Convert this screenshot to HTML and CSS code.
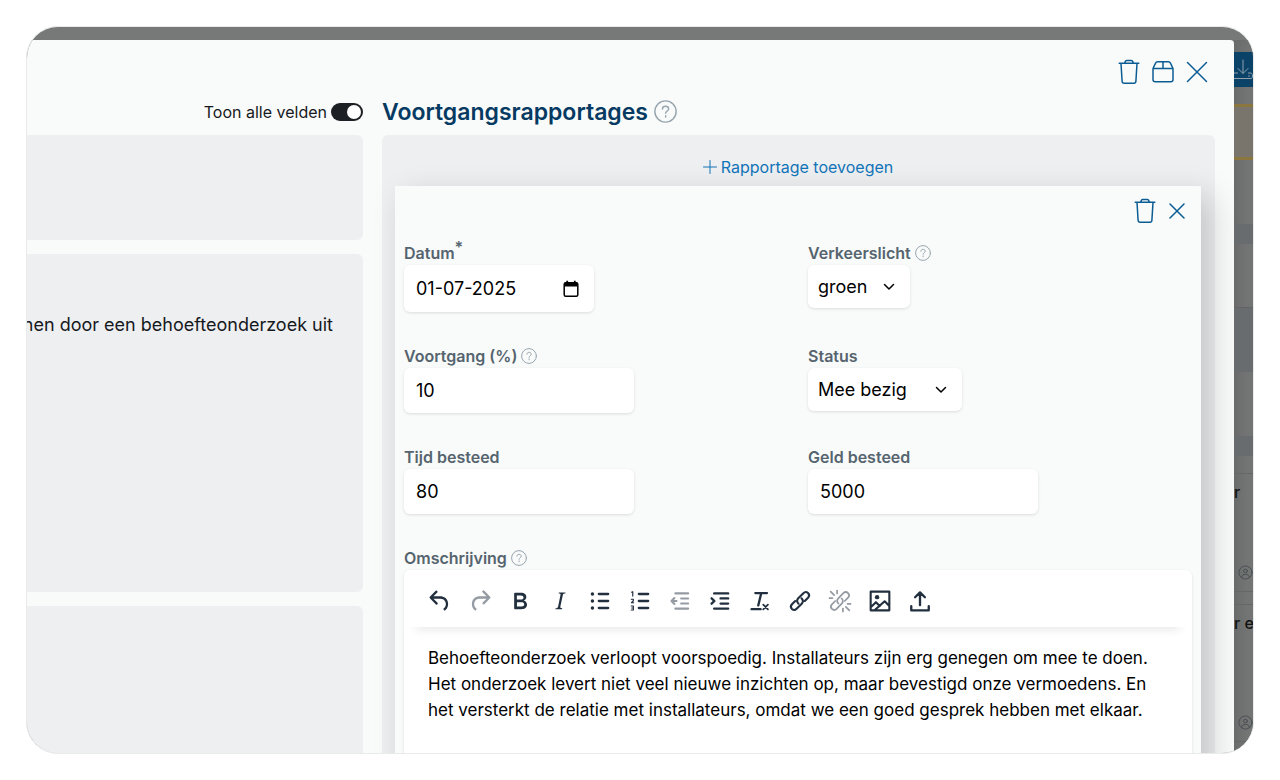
FILE: index.html
```html
<!DOCTYPE html>
<html lang="nl">
<head>
  <meta charset="UTF-8">
  <meta name="viewport" content="width=device-width, initial-scale=1">
  <title>Voortgangsrapportages</title>
  <link rel="stylesheet" href="styles.css">
</head>
<body>

<!-- Shared icons -->
<svg class="sprite" aria-hidden="true">
  <symbol id="help" viewBox="0 0 16 16">
    <circle cx="8" cy="8" r="7.4"/>
    <path d="M5.9 6.2c0-1.2.9-1.9 2.1-1.9s2.2.7 2.2 1.9c0 1.4-2.1 1.6-2.1 3.1M8.1 10.9v.9"/>
  </symbol>
  <symbol id="trash" viewBox="0 0 22 26">
    <path d="M1.2 4.2h19.6M3 4.5l1.1 17.8c.1 1.4.8 2 2 2h9.8c1.2 0 1.9-.6 2-2L19 4.5M6.6 4l.9-1.8c.3-.5.7-.7 1.3-.7h4.4c.6 0 1 .2 1.3.7l.9 1.8"/>
  </symbol>
  <symbol id="person" viewBox="0 0 16 16">
    <circle cx="8" cy="8" r="7"/>
    <circle cx="8" cy="6.4" r="2"/>
    <path d="M4 13.4c0-2.4 1.5-3.4 4-3.4s4 1 4 3.4"/>
  </symbol>
</svg>

<div class="frame">
  <main class="dialog">
    <div class="dialog-actions">
      <button class="icon-btn" aria-label="Verwijderen"><svg width="22" height="26"><use href="#trash"/></svg></button>
      <button class="icon-btn" aria-label="Archiveren">
        <svg width="22" height="24" viewBox="0 0 22 24"><path d="M1 8.5v11c0 1.500.9 2.300 2.300 2.300h15.400c1.400 0 2.300-.8 2.300-2.300v-11M1 8.500h20M1 8.500l2.400-5.100C3.900 2.200 4.600 1.700 5.700 1.700h10.600c1.100 0 1.800.5 2.300 1.700L21 8.500M11 1.700v6.800"/></svg>
      </button>
      <button class="icon-btn" aria-label="Sluiten">
        <svg width="22" height="22" viewBox="0 0 22 22"><path d="M1.500 1.500l19 19M20.500 1.500l-19 19"/></svg>
      </button>
    </div>

    <div class="columns">
      <section class="left">
        <div class="title-row">
          <label for="all-fields">Toon alle velden</label>
          <input type="checkbox" role="switch" id="all-fields" class="switch" checked>
        </div>
        <div class="block block-small"></div>
        <div class="block block-text"><p>nen door een behoefteonderzoek uit</p></div>
        <div class="block block-rest"></div>
      </section>

      <section class="right">
        <div class="title-row">
          <h2>Voortgangsrapportages</h2>
          <svg class="help help-large"><use href="#help"/></svg>
        </div>
        <div class="reports">
          <a href="#" class="add-link">
            <svg width="14" height="14" viewBox="0 0 14 14"><path d="M7 .5v13M.5 7h13"/></svg>
            Rapportage toevoegen
          </a>

          <form class="report">
            <div class="report-actions">
              <button type="button" class="icon-btn" aria-label="Rapportage verwijderen"><svg width="22" height="26"><use href="#trash"/></svg></button>
              <button type="button" class="icon-btn" aria-label="Rapportage sluiten">
                <svg width="16" height="16" viewBox="0 0 16 16"><path d="M1 1l14 14M15 1L1 15"/></svg>
              </button>
            </div>

            <div class="fields">
              <div class="field">
                <div class="label"><label for="datum">Datum<sup>*</sup></label></div>
                <div class="date">
                  <input type="text" id="datum" value="01-07-2025">
                  <svg width="16" height="18" viewBox="0 0 16 18"><path class="fill" d="M2 2.500h12v4H2zM3.300.8h1.800v2H3.300zM10.900.8h1.800v2h-1.800z"/><rect x="1.200" y="2.700" width="13.600" height="13.600" rx="1.500"/></svg>
                </div>
              </div>
              <div class="field">
                <div class="label"><label for="verkeerslicht">Verkeerslicht</label><svg class="help"><use href="#help"/></svg></div>
                <div class="select">
                  <select id="verkeerslicht" class="select-short"><option>groen</option></select>
                  <svg width="12" height="8" viewBox="0 0 12 8"><path d="M1.500 1.500L6 6l4.500-4.500"/></svg>
                </div>
              </div>
              <div class="field">
                <div class="label"><label for="voortgang">Voortgang (%)</label><svg class="help"><use href="#help"/></svg></div>
                <input type="text" id="voortgang" value="10">
              </div>
              <div class="field">
                <div class="label"><label for="status">Status</label></div>
                <div class="select">
                  <select id="status" class="select-long"><option>Mee bezig</option></select>
                  <svg width="12" height="8" viewBox="0 0 12 8"><path d="M1.500 1.500L6 6l4.500-4.500"/></svg>
                </div>
              </div>
              <div class="field">
                <div class="label"><label for="tijd">Tijd besteed</label></div>
                <input type="text" id="tijd" value="80">
              </div>
              <div class="field">
                <div class="label"><label for="geld">Geld besteed</label></div>
                <input type="text" id="geld" value="5000">
              </div>
            </div>

            <div class="label"><label for="omschrijving">Omschrijving</label><svg class="help"><use href="#help"/></svg></div>
            <div class="editor">
              <div class="toolbar">
                <button type="button" aria-label="Ongedaan maken"><svg viewBox="0 0 24 24"><path class="fill" d="M6.400 8H12c3.700 0 6.200 2 6.800 5.100.6 2.700-.4 5.600-2.300 6.800a1 1 0 0 1-1-1.800c1.100-.6 1.800-2.700 1.400-4.600-.5-2.100-2.100-3.500-4.900-3.500H6.400l3.300 3.300a1 1 0 1 1-1.400 1.400l-5-5a1 1 0 0 1 0-1.400l5-5a1 1 0 0 1 1.400 1.400L6.400 8Z"/></svg></button>
                <button type="button" aria-label="Opnieuw" disabled><svg viewBox="0 0 24 24"><path class="fill" d="M17.600 10H12c-2.800 0-4.400 1.400-4.900 3.500-.4 2 .3 4 1.400 4.600a1 1 0 1 1-1 1.800c-2-1.200-2.900-4.100-2.300-6.800.6-3 3-5.100 6.800-5.100h5.600l-3.300-3.300a1 1 0 1 1 1.400-1.400l5 5a1 1 0 0 1 0 1.400l-5 5a1 1 0 0 1-1.400-1.400l3.300-3.300Z"/></svg></button>
                <button type="button" aria-label="Vet"><svg viewBox="0 0 24 24"><path class="fill" d="M7.800 19c-.3 0-.5 0-.6-.2l-.2-.5V5.700c0-.2 0-.4.2-.5l.6-.2h5c1.500 0 2.700.3 3.500 1 .7.600 1.100 1.400 1.100 2.500a3 3 0 0 1-.6 1.900c-.4.600-1 1-1.600 1.200.4.100.9.300 1.300.6s.8.700 1 1.200c.4.400.5 1 .5 1.600 0 1.300-.4 2.300-1.300 3-.8.700-2.100 1-3.800 1H7.800Zm5-8.300c.6 0 1.200-.1 1.600-.5.4-.3.6-.7.6-1.300 0-1.100-.8-1.700-2.300-1.700H9.300v3.500h3.400Zm.5 6c.7 0 1.300-.1 1.700-.4.4-.4.6-.9.6-1.500s-.2-1-.7-1.400c-.4-.3-1-.4-2-.4H9.400v3.800h4Z"/></svg></button>
                <button type="button" aria-label="Cursief"><svg viewBox="0 0 24 24"><path class="fill" d="m16.700 4.700-.1.900h-.3c-.6 0-1 0-1.400.3-.3.300-.4.600-.5 1.100l-2.100 9.800v.6c0 .5.400.8 1.400.8h.2l-.2.800H8l.2-.8h.2c1.100 0 1.800-.5 2-1.500l2-9.800.1-.5c0-.6-.4-.8-1.400-.8h-.3l.2-.9h5.700Z"/></svg></button>
                <button type="button" aria-label="Opsomming"><svg viewBox="0 0 24 24"><path d="M11 6h8M11 12h8M11 18h8"/><path class="fill" d="M4 6a1.500 1.500 0 1 1 3 0 1.500 1.500 0 0 1-3 0M4 12a1.500 1.500 0 1 1 3 0 1.500 1.500 0 0 1-3 0M4 18a1.500 1.500 0 1 1 3 0 1.500 1.500 0 0 1-3 0"/></svg></button>
                <button type="button" aria-label="Genummerde lijst"><svg viewBox="0 0 24 24"><path d="M11 6h8M11 12h8M11 18h8"/><path class="thin" d="M4.800 4.500l1-.5v3.800M4.500 10.500h1.800v1.300l-1.600 1.700h1.900M4.500 16.300h1.800v3.400H4.500M4.900 18h1.300"/></svg></button>
                <button type="button" aria-label="Inspringing verkleinen" disabled><svg viewBox="0 0 24 24"><path class="medium" d="M8 5.500h11M13 9.800h6M13 14.200h6M8 18.500h11M7.200 9.500L4.700 12l2.500 2.500M5 12h4"/></svg></button>
                <button type="button" aria-label="Inspringing vergroten"><svg viewBox="0 0 24 24"><path d="M7 5.500h12M12.500 9.800H19M12.500 14.200H19M7 18.500h12M4.800 9.700L7.200 12l-2.400 2.300"/></svg></button>
                <button type="button" aria-label="Opmaak wissen"><svg viewBox="0 0 24 24"><path d="M8 5.200h10M13 5.500l-2.500 10.300M4.800 19h7.700"/><path class="mid" d="M14.800 15.200l4 4M18.800 15.200l-4 4"/></svg></button>
                <button type="button" aria-label="Koppeling"><svg viewBox="0 0 24 24"><path class="medium" d="M10.700 14.200c-1.500-1.200-1.500-3.200-.2-4.500l4.400-4.400c1.200-1.200 2.900-1.100 4-.1 1.100 1.100 1.100 2.800 0 4l-2.800 2.800M13.300 9.800c1.500 1.200 1.500 3.200.2 4.500l-4.400 4.400c-1.200 1.200-2.900 1.100-4 .1-1.100-1.100-1.100-2.800 0-4l2.800-2.800"/></svg></button>
                <button type="button" aria-label="Koppeling verwijderen" disabled><svg viewBox="0 0 24 24"><path class="mid" d="M10.700 14.200c-1.500-1.200-1.500-3.200-.2-4.500l4.400-4.400c1.200-1.200 2.900-1.100 4-.1 1.100 1.100 1.100 2.800 0 4l-2.800 2.800M13.300 9.800c1.500 1.200 1.500 3.200.2 4.500l-4.400 4.400c-1.200 1.200-2.900 1.100-4 .1-1.100-1.100-1.100-2.800 0-4l2.800-2.800"/><path class="mid" d="M4 4l3 3M9.500 3v2.500M3 9.500h2.500M17 17l3 3M14.500 18.500V21M18.500 14.500H21"/></svg></button>
                <button type="button" aria-label="Afbeelding"><svg viewBox="0 0 24 24"><path class="medium" d="M4 4h16v16H4zM4.500 17l4-4 3.300 3.300M7.800 19.500l8.200-7.300 4 4"/><circle class="fill" cx="9.500" cy="8.700" r="1.900"/></svg></button>
                <button type="button" aria-label="Uploaden"><svg viewBox="0 0 24 24"><path d="M12 15.500V5M7.800 8.800L12 4.600l4.200 4.200M4.500 16.500V20h15v-3.500"/></svg></button>
              </div>
              <textarea id="omschrijving" spellcheck="false">Behoefteonderzoek verloopt voorspoedig. Installateurs zijn erg genegen om mee te doen. Het onderzoek levert niet veel nieuwe inzichten op, maar bevestigd onze vermoedens. En het versterkt de relatie met installateurs, omdat we een goed gesprek hebben met elkaar.</textarea>
            </div>
          </form>
        </div>
      </section>
    </div>
  </main>

  <!-- Page behind the dialog -->
  <aside class="backdrop">
    <div class="bar"><svg width="20" height="22" viewBox="0 0 20 22"><path d="M9 2v13M4 10.500l5 5 5-5M0 15h3.500M14.500 15H16c2 0 2.500 1 2.500 3s-.5 2.500-2.500 2.500H0M14.500 18h1"/></svg></div>
    <div class="gap"></div>
    <div class="notice"></div>
    <div class="row plain"></div>
    <div class="row short cool"></div>
    <div class="row plain lined"></div>
    <div class="row cool"></div>
    <div class="row plain"></div>
    <div class="row short cool"></div>
    <div class="gap"></div>
    <div class="tile"><span>r</span><svg><use href="#person"/></svg></div>
    <div class="tile"><span>r ee</span><svg><use href="#person"/></svg></div>
  </aside>
</div>

</body>
</html>
```
FILE: styles.css
```css
* {
  box-sizing: border-box;
}

body {
  margin: 0;
  padding: 26px 26px 0;
  background-color: #fff;
  color: #16191d;
  font-family: Inter, "Liberation Sans", sans-serif;
  font-size: 16px;
}

h2, p {
  margin: 0;
}

button {
  padding: 0;
  border: 0;
  background: none;
  cursor: pointer;
}

svg {
  display: block;
  flex: none;
  fill: none;
  stroke: currentColor;
  stroke-linecap: round;
  stroke-linejoin: round;
}

.fill {
  fill: currentColor;
  stroke: none;
}

.sprite {
  position: absolute;
  width: 0;
  height: 0;
}

.frame {
  display: flex;
  height: calc(100vh - 52px);
  padding-top: 13px;
  overflow: hidden;
  border: 1px solid #e9ebeb;
  border-radius: 32px;
  background-color: #777978;
}

/* Dialog */
.dialog {
  flex: 1;
  min-width: 0;
  padding-right: 19px;
  overflow: hidden;
  border-radius: 0 4px 0 0;
  background-color: #f9fbfa;
}

.dialog-actions {
  display: flex;
  align-items: center;
  justify-content: flex-end;
  gap: 12px;
  height: 48px;
  padding: 16px 7px 0 0;
}

.icon-btn {
  color: #0c5c94;
}

.icon-btn svg {
  stroke-width: 1.5;
}

.columns {
  display: flex;
  gap: 19px;
}

.left {
  flex: 0 0 336px;
  min-width: 0;
}

.right {
  flex: 1;
  min-width: 0;
}

.title-row {
  display: flex;
  align-items: center;
  gap: 6px;
  height: 47px;
}

.left .title-row {
  justify-content: flex-end;
  gap: 4px;
}

h2 {
  color: #063a62;
  font-size: 23px;
  font-weight: 600;
}

.switch {
  appearance: none;
  display: flex;
  justify-content: flex-end;
  width: 32px;
  height: 18px;
  margin: 0;
  padding: 2px;
  border-radius: 9px;
  background-color: #1c1f23;
}

.switch::before {
  content: "";
  width: 14px;
  height: 14px;
  border-radius: 50%;
  background-color: #fff;
}

.help {
  width: 16px;
  height: 16px;
  color: #98a5ae;
}

.help-large {
  width: 23px;
  height: 23px;
}

.block {
  display: flex;
  justify-content: flex-end;
  margin-bottom: 14px;
  padding: 58px 30px 0 0;
  overflow: hidden;
  border-radius: 0 6px 6px 0;
  background-color: #eeeff1;
}

.block p {
  font-size: 18px;
  line-height: 26px;
  white-space: nowrap;
}

.block-small {
  height: 105px;
}

.block-text {
  height: 338px;
}

.block-rest {
  height: 400px;
}

/* Reports */
.reports {
  padding: 19px 14px 0 13px;
  border-radius: 6px;
  background-color: #eeeff1;
}

.add-link {
  display: flex;
  align-items: center;
  justify-content: center;
  gap: 4px;
  height: 26px;
  margin-bottom: 6px;
  color: #1274b8;
  text-decoration: none;
}

.report {
  padding: 12px 9px 40px;
  background-color: #f9fbfa;
  box-shadow: 10px 10px 30px rgba(0, 0, 0, 0.18);
}

.report-actions {
  display: flex;
  align-items: center;
  justify-content: flex-end;
  gap: 13px;
  height: 26px;
  padding-right: 7px;
  margin-bottom: 17px;
}

.fields {
  display: grid;
  grid-template-columns: 1fr 1fr;
  gap: 32px 20px;
  margin-bottom: 32px;
}

.label {
  display: flex;
  align-items: center;
  gap: 4px;
  height: 24px;
  color: #55646e;
  font-weight: 600;
}

sup {
  font-size: 16px;
  line-height: 0;
}

input[type="text"],
select {
  display: block;
  width: 230px;
  height: 45px;
  padding: 0 12px;
  border: 0;
  border-radius: 6px;
  background-color: #fff;
  box-shadow: 0 1px 3px rgba(0, 0, 0, 0.12);
  color: #000;
  font-family: inherit;
  font-size: 18px;
}

.date,
.select {
  display: flex;
  align-items: center;
}

.date input[type="text"] {
  width: 190px;
  height: 47px;
}

/* Icons drawn over the right end of the control */
.date svg,
.select svg {
  position: relative;
  left: -31px;
  color: #000;
  stroke-width: 1.5;
  pointer-events: none;
}

.select svg {
  left: -27px;
}

select {
  appearance: none;
  height: 43px;
  padding: 0 10px;
}

.select-short {
  width: 102px;
}

.select-long {
  width: 154px;
}

/* Editor */
.editor {
  border-radius: 6px;
  background-color: #fff;
  box-shadow: 0 1px 3px rgba(0, 0, 0, 0.12);
}

.toolbar {
  display: flex;
  height: 57px;
  margin: 0 4px;
  padding: 5px 12px 0;
  box-shadow: 0 10px 10px -8px rgba(0, 0, 0, 0.1);
}

.toolbar button {
  display: flex;
  align-items: center;
  justify-content: center;
  width: 40px;
  color: #222f3e;
}

.toolbar button:disabled {
  color: #959ba3;
}

.toolbar svg {
  width: 28px;
  height: 28px;
  stroke-width: 2;
}

.toolbar .thin {
  stroke-width: 1;
}

.toolbar .mid {
  stroke-width: 1.5;
}

.toolbar .medium {
  stroke-width: 1.8;
}

textarea {
  display: block;
  width: 100%;
  height: 220px;
  padding: 18px 24px;
  border: 0;
  background: none;
  color: #000;
  font-family: inherit;
  font-size: 17px;
  line-height: 26px;
  resize: none;
}

/* Backdrop */
.backdrop {
  flex: 0 0 19px;
  padding-top: 12px;
  overflow: hidden;
  background-color: #747675;
  box-shadow: inset 6px 0 12px rgba(0, 0, 0, 0.1);
}

.bar {
  height: 35px;
  padding-top: 6px;
  background-color: #0b4368;
  color: #91a2ae;
}

.gap {
  height: 17px;
}

.notice {
  height: 56px;
  border: solid #8c7640;
  border-width: 3px 0;
  background-color: #7a756c;
}

.row {
  height: 64px;
}

.short {
  height: 20px;
}

.cool {
  background-color: #696c6f;
}

.lined {
  border-bottom: 1px solid #626464;
}

.tile {
  display: flex;
  flex-direction: column;
  justify-content: space-between;
  height: 119px;
  margin-bottom: 12px;
  padding: 8px 0 11px;
  border: solid #656666;
  border-width: 1px 0;
  color: #111;
  font-size: 16px;
  font-weight: 500;
  white-space: nowrap;
}

.tile + .tile {
  height: 138px;
  margin: 0;
}

.tile svg {
  width: 15px;
  height: 15px;
  margin-left: 4px;
  color: #484d52;
}
```
